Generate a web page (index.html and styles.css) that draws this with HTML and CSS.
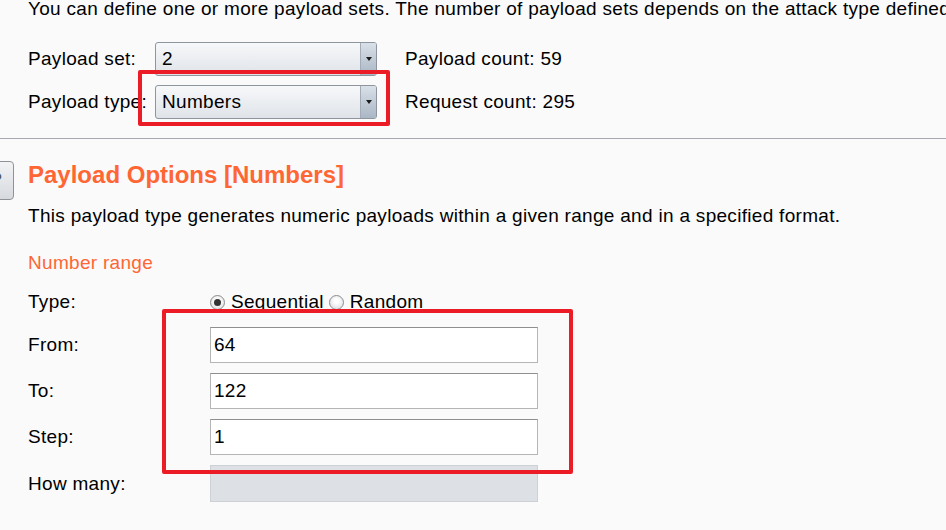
FILE: index.html
```html
<!DOCTYPE html>
<html>
<head>
<meta charset="utf-8">
<link rel="stylesheet" href="styles.css">
</head>
<body>
<div class="page">
  <p class="intro">You can define one or more payload sets. The number of payload sets depends on the attack type defined in the Positions tab.</p>
  <div class="sets">
    <div class="set-row">
      <span class="set-label">Payload set:</span>
      <div class="select"><span class="select-value">2</span><span class="select-btn"><span class="tri"></span></span></div>
      <span class="count">Payload count: 59</span>
    </div>
    <div class="set-row">
      <span class="set-label">Payload type:</span>
      <div class="select"><span class="select-value">Numbers</span><span class="select-btn"><span class="tri"></span></span></div>
      <span class="count">Request count: 295</span>
    </div>
    <div class="mark mark-type"></div>
  </div>
</div>
<div class="sep"></div>
<div class="page">
  <div class="head-row">
    <div class="help">?</div>
    <h2 class="title">Payload Options [Numbers]</h2>
  </div>
  <p class="desc">This payload type generates numeric payloads within a given range and in a specified format.</p>
  <h3 class="sub">Number range</h3>
  <div class="range">
    <div class="field-row type-row">
      <span class="field-label">Type:</span>
      <div class="radios">
        <span class="radio on"></span><span class="rlabel">Sequential</span>
        <span class="radio"></span><span class="rlabel">Random</span>
      </div>
    </div>
    <div class="field-row">
      <span class="field-label">From:</span>
      <div class="input">64</div>
    </div>
    <div class="field-row">
      <span class="field-label">To:</span>
      <div class="input">122</div>
    </div>
    <div class="field-row">
      <span class="field-label">Step:</span>
      <div class="input">1</div>
    </div>
    <div class="field-row many-row">
      <span class="field-label">How many:</span>
      <div class="input disabled"></div>
    </div>
    <div class="mark mark-range"></div>
  </div>
</div>
</body>
</html>
```
FILE: styles.css
```css
html, body {
  margin: 0;
  padding: 0;
  background: #fafafa;
  overflow: hidden;
}
body {
  width: 946px;
  height: 530px;
  font-family: "Liberation Sans", Arial, sans-serif;
  font-size: 19px;
  letter-spacing: 0.3px;
  color: #000;
}
.page {
  padding-left: 28px;
}
.intro {
  margin: -2px 0 0 0;
  line-height: 22px;
  white-space: nowrap;
}
.sets {
  position: relative;
  margin-top: 22px;
  display: flex;
  flex-direction: column;
  gap: 9px;
}
.set-row {
  display: flex;
  align-items: center;
  height: 34px;
}
.set-label {
  width: 127px;
  flex: none;
}
.select {
  width: 222px;
  height: 34px;
  box-sizing: border-box;
  border: 1px solid #8e959e;
  border-radius: 3px;
  background: linear-gradient(#f7f8fa, #dfe3e8);
  display: flex;
  align-items: center;
  flex: none;
}
.select-value {
  flex: 1;
  padding-left: 6px;
}
.select-btn {
  width: 16px;
  height: 100%;
  box-sizing: border-box;
  border-left: 1px solid #a3acb6;
  border-radius: 0 2px 2px 0;
  background: linear-gradient(#d9e0e8, #aab7c5);
  display: flex;
  align-items: center;
  justify-content: center;
}
.tri {
  width: 0;
  height: 0;
  border-left: 3.5px solid transparent;
  border-right: 3.5px solid transparent;
  border-top: 4px solid #1c1c1c;
}
.count {
  margin-left: 28px;
  white-space: nowrap;
}
.mark {
  position: absolute;
  border: 4px solid #ec1c26;
  border-radius: 2px;
  box-sizing: border-box;
  pointer-events: none;
}
.mark-type {
  left: 110px;
  top: 28px;
  width: 252px;
  height: 56px;
}
.sep {
  margin-top: 19px;
  height: 1px;
  background: #a8a9b0;
}
.head-row {
  display: flex;
  align-items: flex-start;
  gap: 14px;
  margin-top: 22px;
}
.help {
  width: 34px;
  height: 39px;
  margin-left: -48px;
  box-sizing: border-box;
  border: 1px solid #8f9399;
  border-radius: 4px;
  background: linear-gradient(#f2f3f5, #d6d9de);
  display: flex;
  align-items: center;
  justify-content: center;
  font-weight: bold;
  font-size: 18px;
  color: #555;
  flex: none;
}
.title {
  margin: 0;
  font-size: 24px;
  line-height: 28px;
  font-weight: bold;
  letter-spacing: 0;
  color: #ff6633;
}
.desc {
  margin: 5px 0 0 0;
  line-height: 22px;
  white-space: nowrap;
}
.sub {
  margin: 25px 0 0 0;
  font-weight: normal;
  font-size: 19px;
  line-height: 22px;
  color: #ff6633;
}
.range {
  position: relative;
  margin-top: 13px;
  display: flex;
  flex-direction: column;
  gap: 10px;
}
.field-row {
  display: flex;
  align-items: center;
  height: 36px;
}
.type-row {
  height: 30px;
}
.many-row {
  height: 37px;
}
.field-label {
  width: 182px;
  flex: none;
}
.radios {
  display: flex;
  align-items: center;
}
.radio {
  width: 15px;
  height: 15px;
  box-sizing: border-box;
  border: 1px solid #8a8c90;
  border-radius: 50%;
  background: radial-gradient(circle at 50% 40%, #ffffff 20%, #d4d6da 100%);
  display: flex;
  align-items: center;
  justify-content: center;
  flex: none;
}
.radio.on::after {
  content: "";
  width: 7px;
  height: 7px;
  border-radius: 50%;
  background: #333;
}
.rlabel {
  margin-left: 6px;
  margin-right: 5px;
}
.input {
  width: 328px;
  height: 100%;
  box-sizing: border-box;
  border: 1px solid #b5b5b5;
  border-top-color: #8f8f8f;
  background: #fff;
  padding-left: 3px;
  display: flex;
  align-items: center;
}
.input.disabled {
  background: #dde0e5;
  border-color: #cdd0d5;
}
.mark-range {
  left: 134px;
  top: 22px;
  width: 411px;
  height: 165px;
}
```
